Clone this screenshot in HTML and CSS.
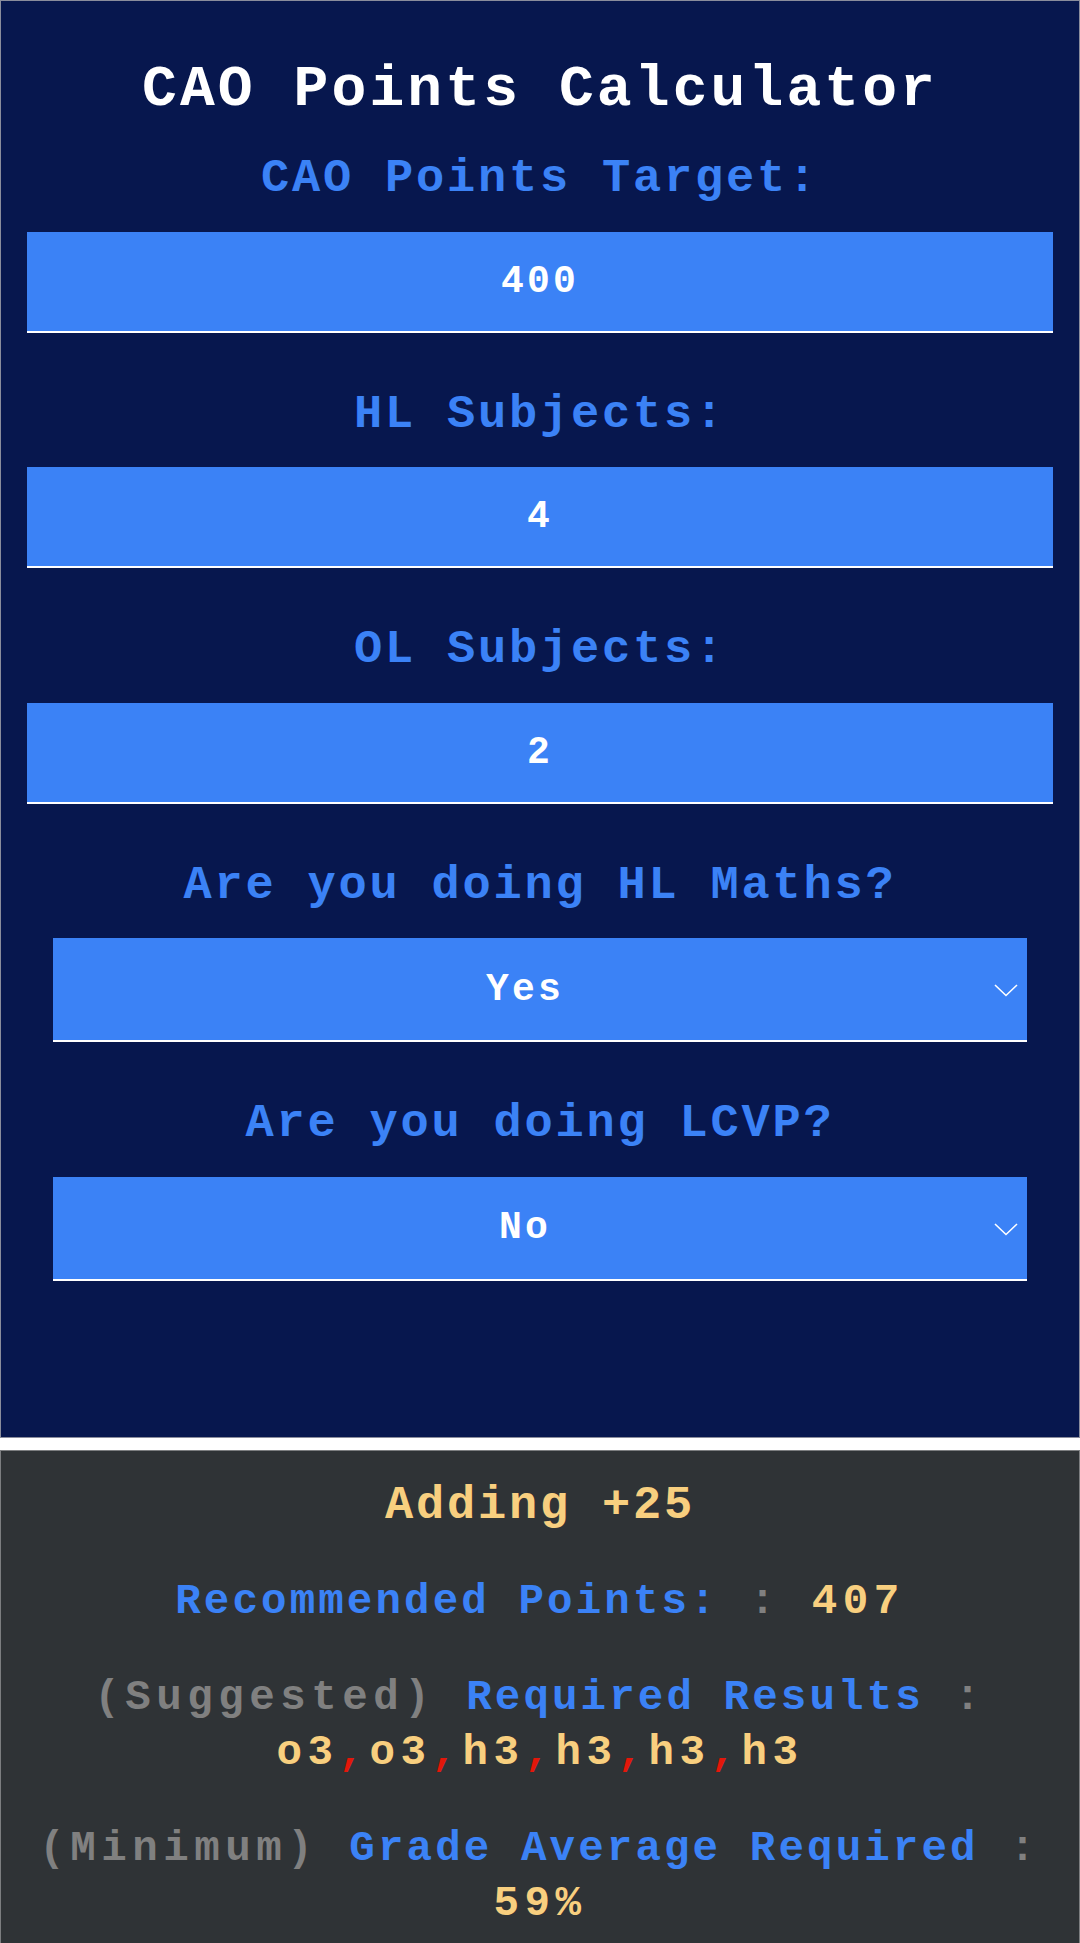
FILE: index.html
```html
<!DOCTYPE html>
<html lang="en">
<head>
<meta charset="utf-8">
<title>CAO Points Calculator</title>
<link rel="stylesheet" href="styles.css">
</head>
<body>
<main class="calc">
  <h1 class="title">CAO Points Calculator</h1>
  <div class="fields">
    <div class="field">
      <label class="field-label" for="target">CAO Points Target:</label>
      <input class="field-input" id="target" type="text" inputmode="numeric" value="400">
    </div>
    <div class="field">
      <label class="field-label" for="hl">HL Subjects:</label>
      <input class="field-input" id="hl" type="text" inputmode="numeric" value="4">
    </div>
    <div class="field">
      <label class="field-label" for="ol">OL Subjects:</label>
      <input class="field-input" id="ol" type="text" inputmode="numeric" value="2">
    </div>
    <div class="field">
      <label class="field-label" for="maths">Are you doing HL Maths?</label>
      <div class="select-wrap">
        <select class="field-select" id="maths">
          <option selected>Yes</option>
          <option>No</option>
        </select>
        <svg class="chevron" width="24" height="13" viewBox="0 0 24 13" aria-hidden="true"><polyline points="1,1 12,11.5 23,1" fill="none" stroke="#ffffff" stroke-width="1.6"/></svg>
      </div>
    </div>
    <div class="field">
      <label class="field-label" for="lcvp">Are you doing LCVP?</label>
      <div class="select-wrap">
        <select class="field-select" id="lcvp">
          <option>Yes</option>
          <option selected>No</option>
        </select>
        <svg class="chevron" width="24" height="13" viewBox="0 0 24 13" aria-hidden="true"><polyline points="1,1 12,11.5 23,1" fill="none" stroke="#ffffff" stroke-width="1.6"/></svg>
      </div>
    </div>
  </div>
</main>
<section class="results">
  <p class="adding">Adding +25</p>
  <p class="line"><span class="key">Recommended Points:</span><span class="muted"> : </span><span class="val">407</span></p>
  <p class="line"><span class="muted">(Suggested) </span><span class="key">Required Results</span><span class="muted"> : </span><span class="val">o3<span class="sep">,</span>o3<span class="sep">,</span>h3<span class="sep">,</span>h3<span class="sep">,</span>h3<span class="sep">,</span>h3</span></p>
  <p class="line"><span class="muted">(Minimum) </span><span class="key">Grade Average Required</span><span class="muted"> : </span><span class="val">59%</span></p>
</section>
</body>
</html>
```

FILE: styles.css
```css
html, body {
  margin: 0;
  padding: 0;
  background: #ffffff;
}

body {
  font-family: "Liberation Mono", "DejaVu Sans Mono", monospace;
  font-weight: bold;
}

.calc {
  background: #07174e;
  border: 1px solid #8a8d9c;
  padding-top: 54px;
}

.title {
  margin: 0;
  color: #ffffff;
  font-size: 58px;
  line-height: 70px;
  letter-spacing: 3.1px;
  text-align: center;
  font-weight: bold;
}

.fields {
  display: flex;
  flex-direction: column;
  gap: 54px;
  margin-top: 26px;
  padding: 0 26px 156px;
}

.field {
  display: flex;
  flex-direction: column;
  gap: 24.5px;
}

.field-label {
  display: block;
  color: #3b82f6;
  font-size: 47px;
  line-height: 56px;
  letter-spacing: 2.8px;
  text-align: center;
}

.field-input,
.field-select {
  box-sizing: border-box;
  width: 100%;
  margin: 0;
  background: #3b82f6;
  color: #ffffff;
  border: none;
  border-bottom: 2px solid #ffffff;
  border-radius: 0;
  outline: none;
  font-family: inherit;
  font-weight: bold;
  font-size: 38px;
  letter-spacing: 3.2px;
  text-align: center;
}

.field-input {
  height: 101px;
  padding: 0;
}

.select-wrap {
  position: relative;
  margin: 0 26px;
}

.field-select {
  height: 104px;
  padding: 0 30px 0 0;
  appearance: none;
  -webkit-appearance: none;
  text-align-last: center;
}

.chevron {
  position: absolute;
  right: 9px;
  top: 46px;
  pointer-events: none;
}

.results {
  margin-top: 12px;
  background: #2f3336;
  border: 1px solid #7c7e80;
  padding: 27px 0 40px;
  display: flex;
  flex-direction: column;
  gap: 41px;
  text-align: center;
}

.results p {
  margin: 0;
}

.adding {
  color: #f8cf7f;
  font-size: 47px;
  line-height: 56px;
  letter-spacing: 2.8px;
}

.line {
  font-size: 42.5px;
  line-height: 55px;
}

.key {
  color: #3b82f6;
  letter-spacing: 3.1px;
}

.muted {
  color: #808080;
  letter-spacing: 5.5px;
}

.val {
  color: #f8cf7f;
  letter-spacing: 5.5px;
}

.sep {
  color: #e3170a;
}
```
